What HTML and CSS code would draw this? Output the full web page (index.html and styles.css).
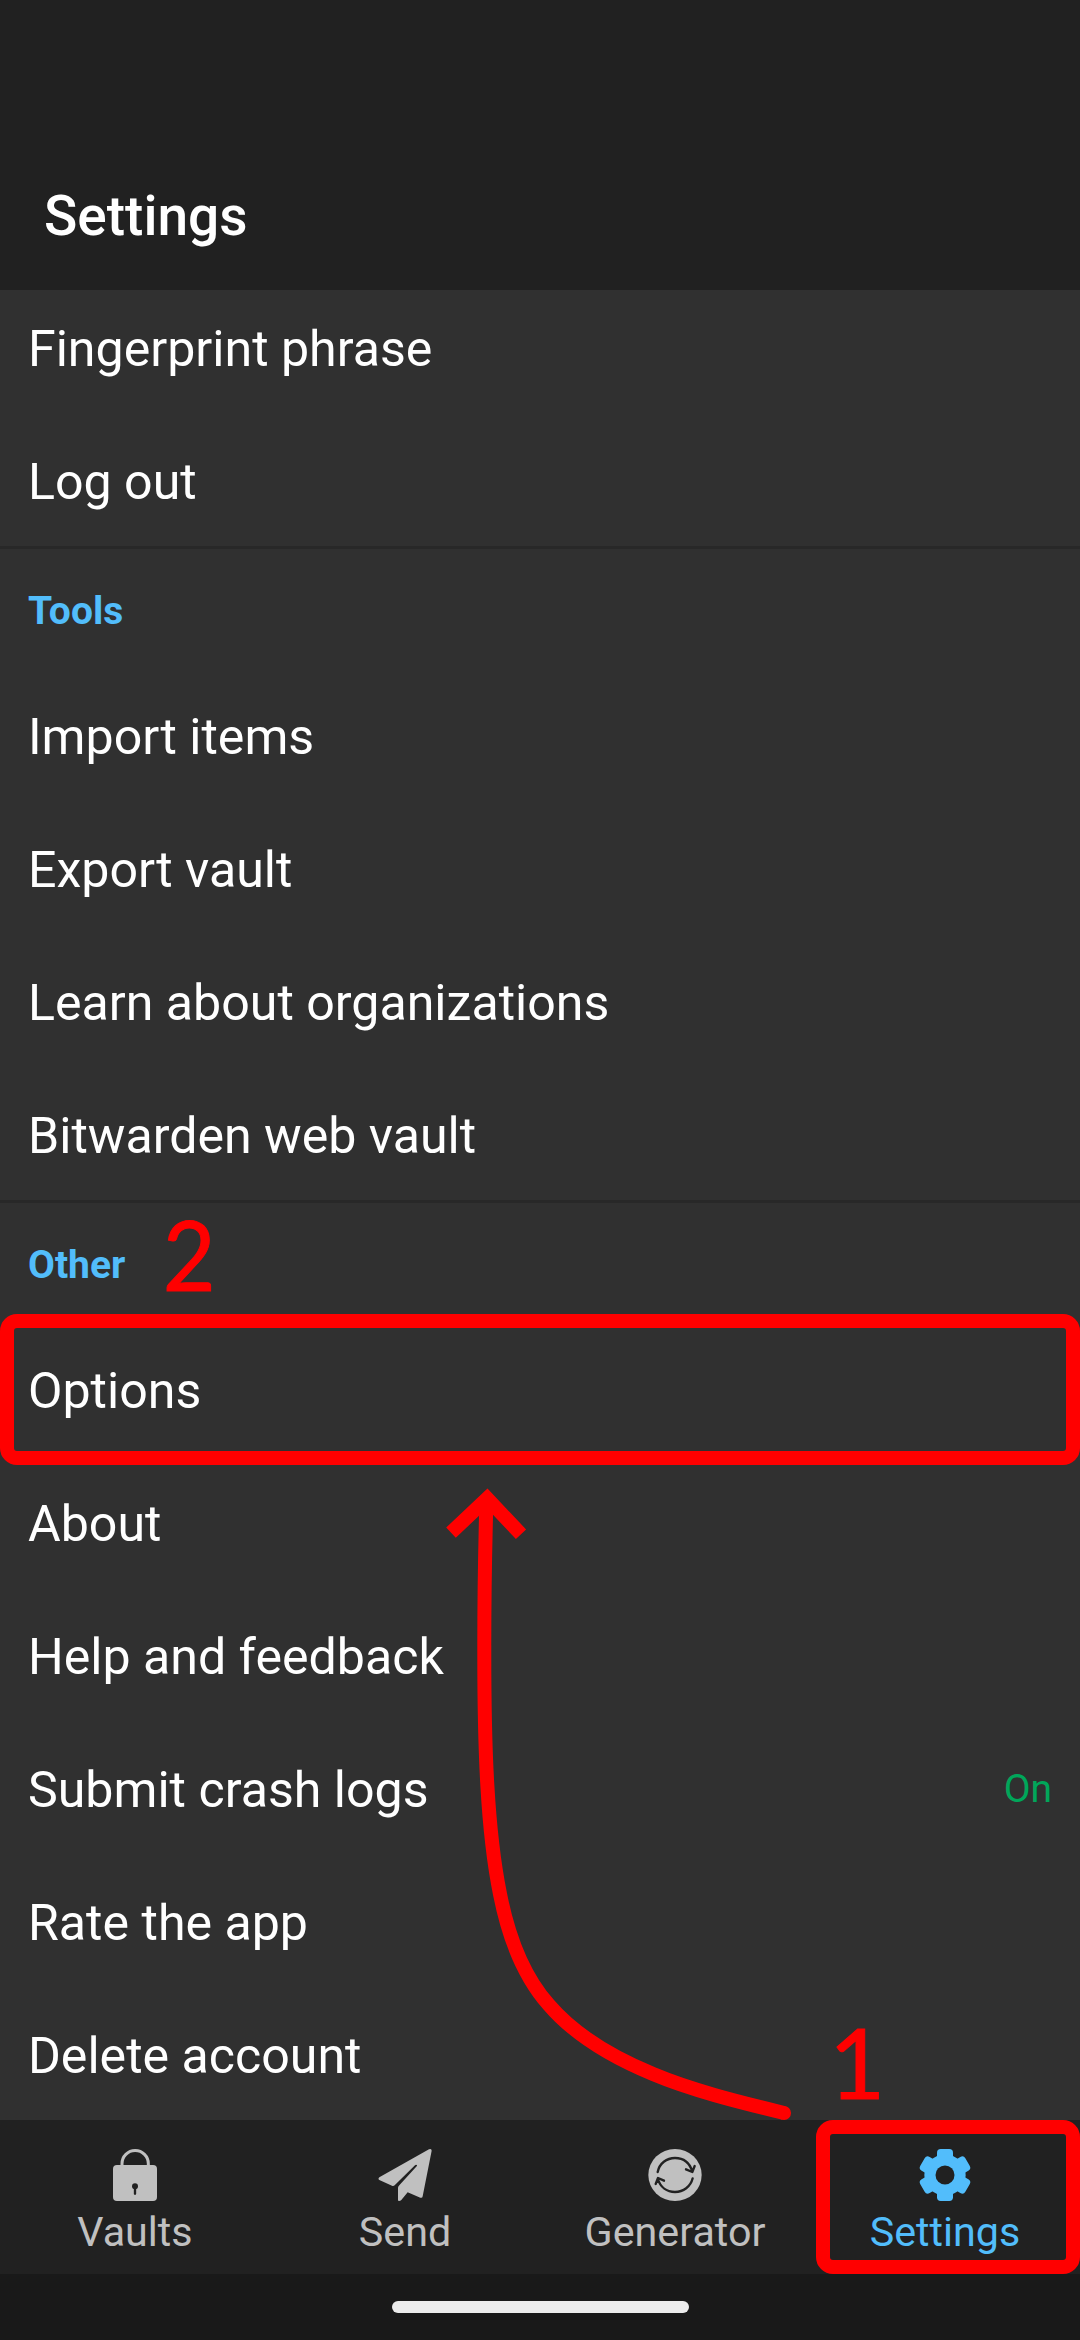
FILE: index.html
```html
<!DOCTYPE html>
<html lang="en">
<head>
<meta charset="utf-8">
<title>Settings</title>
<link rel="stylesheet" href="styles.css">
</head>
<body>
<div class="screen">
  <header class="app-bar"><h1 class="title">Settings</h1></header>
  <main class="list">
    <section class="group">
      <div class="row">Fingerprint phrase</div>
      <div class="row">Log out</div>
    </section>
    <section class="group">
      <h2 class="heading">Tools</h2>
      <div class="row">Import items</div>
      <div class="row">Export vault</div>
      <div class="row">Learn about organizations</div>
      <div class="row">Bitwarden web vault</div>
    </section>
    <section class="group">
      <h2 class="heading">Other</h2>
      <div class="row">Options</div>
      <div class="row">About</div>
      <div class="row">Help and feedback</div>
      <div class="row"><span>Submit crash logs</span><span class="state">On</span></div>
      <div class="row">Rate the app</div>
      <div class="row">Delete account</div>
    </section>
  </main>
  <nav class="tabs">
    <a class="tab">
      <svg class="icon" width="54" height="52" viewBox="0 0 162 156">
        <path d="M42 52V44a39.500 39.500 0 0 1 79 0V52" fill="none" stroke="currentColor" stroke-width="9"/>
        <rect x="15" y="48" width="132" height="108" rx="12" fill="currentColor"/>
        <circle cx="81" cy="112" r="9" fill="#212121"/>
        <path d="M81 114V134" stroke="#212121" stroke-width="7" stroke-linecap="round"/>
      </svg>
      <span>Vaults</span>
    </a>
    <a class="tab">
      <svg class="icon" width="54" height="52" viewBox="0 0 162 156">
        <path d="M153 1Q161-2 161 5L134 142Q133 148 127 146L89 130L70 153Q67 156 63 156Q60 156 60 153V117Q60 113 64 109L116 52Q119 47 114 47L111 49L50 109Q46 112 42 110L4 93Q-1 89 4 85Z" fill="currentColor"/>
      </svg>
      <span>Send</span>
    </a>
    <a class="tab">
      <svg class="icon" width="54" height="52" viewBox="0 0 162 156">
        <ellipse cx="81" cy="78" rx="80" ry="78" fill="currentColor"/>
        <g fill="none" stroke="#212121" stroke-width="7" stroke-linecap="round" stroke-linejoin="round">
          <path d="M29 69C34 43 56 27 81 27C106 27 125 41 133 68M114 61L133 69L140 51"/>
          <path d="M134 88C128 113 106 129 81 129C57 129 37 115 29 89M23 105L30 87L48 95"/>
        </g>
      </svg>
      <span>Generator</span>
    </a>
    <a class="tab tab-active">
      <svg class="icon" width="54" height="52" viewBox="0 0 162 156">
        <g fill="currentColor">
          <circle cx="81" cy="78" r="62"/>
          <rect x="57" y="0" width="48" height="156" rx="11"/>
          <rect x="57" y="0" width="48" height="156" rx="11" transform="rotate(60 81 78)"/>
          <rect x="57" y="0" width="48" height="156" rx="11" transform="rotate(120 81 78)"/>
        </g>
        <circle cx="81" cy="78" r="28.500" fill="#212121"/>
      </svg>
      <span>Settings</span>
    </a>
  </nav>
  <footer class="system-bar"><div class="handle"></div></footer>

  <div class="mark mark-options"></div>
  <div class="mark mark-settings"></div>
  <div class="step step-two">2</div>
  <div class="step step-one">1</div>
  <svg class="arrow" width="360" height="640" viewBox="440 1485 360 640" fill="none" stroke="#f00" stroke-width="14">
    <path d="M486.300 1505C484.800 1560 484.200 1610 484.300 1655C484.300 1745 487 1830 500 1894C509 1940 524 1977 549 2005C573 2033 607 2055 653 2074C691 2090 737 2101.500 784 2113" />
    <circle cx="784" cy="2113" r="7" fill="#f00" stroke="none"/>
    <path d="M451 1532.600L487.200 1498.500L521 1534.200"/>
  </svg>
</div>
</body>
</html>
```
FILE: styles.css
```css
* { box-sizing: border-box; }

body {
  margin: 0;
  background: #303030;
  font-family: Roboto, "Noto Sans", sans-serif;
}

.screen {
  position: relative;
  display: flex;
  flex-direction: column;
  width: 1080px;
  height: 2340px;
  overflow: hidden;
  background: #303030;
  color: #fff;
}

.app-bar {
  display: flex;
  flex: none;
  align-items: flex-end;
  height: 290px;
  padding: 0 44px 42px;
  background: #212121;
}

.title {
  margin: 0;
  font-size: 55px;
  font-weight: 500;
  line-height: 64px;
}

/* The list is scrolled slightly under the app bar. */
.list {
  flex: 1;
  min-height: 0;
  overflow: hidden;
}

.group:first-child { margin-top: -7px; }

.group:not(:last-child) { box-shadow: inset 0 -3px #282828; }

.heading {
  display: flex;
  align-items: center;
  height: 122px;
  margin: 0;
  padding: 2px 28px 0;
  color: #52bdfb;
  font-size: 39px;
  font-weight: 700;
  line-height: 46px;
}

.row {
  display: flex;
  align-items: center;
  justify-content: space-between;
  height: 133px;
  padding: 0 28px 2px;
  font-size: 50.1px;
}

.state {
  padding-bottom: 2px;
  color: #00a65a;
  font-size: 39px;
}

.tabs {
  display: grid;
  flex: none;
  grid-template-columns: repeat(4, 1fr);
  height: 154px;
  background: #212121;
}

.tab {
  display: flex;
  flex-direction: column;
  align-items: center;
  padding-top: 29px;
  color: #c0c0c0;
  font-size: 41.25px;
  line-height: 48px;
}

.tab-active { color: #52bdfb; }

.icon {
  display: block;
  flex: none;
  margin-bottom: 7px;
}

.system-bar {
  display: flex;
  flex: none;
  justify-content: center;
  height: 66px;
  padding-top: 27px;
  background: #191919;
}

.handle {
  width: 297px;
  height: 12px;
  border-radius: 6px;
  background: #ececec;
}

/* Annotations drawn over the screen */
.mark {
  position: absolute;
  border: 14px solid #f00;
  border-radius: 17px;
}

.mark-options {
  top: 1314px;
  left: 0;
  width: 1080px;
  height: 151px;
}

.mark-settings {
  top: 2120px;
  left: 816px;
  width: 264px;
  height: 154px;
}

.step {
  position: absolute;
  color: #f00;
  font-family: Lato, sans-serif;
  font-size: 97px;
  line-height: 120px;
  -webkit-text-stroke: 1px #f00;
}

.step-two {
  top: 1194px;
  left: 161px;
  transform: scaleX(0.94);
}

.step-one { top: 2002px; left: 829px; }

.arrow {
  position: absolute;
  top: 1485px;
  left: 440px;
}
```
